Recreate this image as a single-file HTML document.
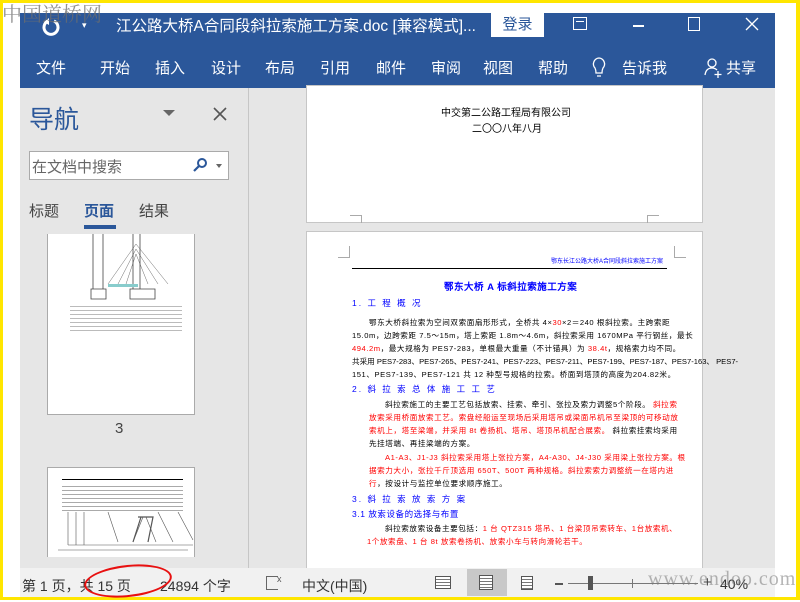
<!DOCTYPE html>
<html><head><meta charset="utf-8"><style>
*{margin:0;padding:0;box-sizing:border-box}
body{width:800px;height:600px;position:relative;background:#fff;overflow:hidden;font-family:"Liberation Sans","Noto Sans CJK SC",sans-serif}
.a{position:absolute}
.ui{font-family:"Liberation Sans","Noto Sans CJK SC",sans-serif}
.doc{font-family:"Liberation Sans","WenQuanYi Zen Hei",sans-serif;font-size:7.6px;line-height:10px;white-space:nowrap;letter-spacing:0.55px}
.l{position:absolute;white-space:nowrap}
.r{color:#f00}.b{color:#00f}
</style></head><body>
<div class="a" style="left:0;top:0;width:800px;height:3px;background:#ffe600"></div>
<div class="a" style="left:0;top:0;width:3px;height:600px;background:#ffe600"></div>
<div class="a" style="right:0;top:0;width:4px;height:600px;background:#ffe600"></div>
<div class="a" style="left:0;bottom:0;width:800px;height:3px;background:#ffe600"></div>

<div class="a" style="left:20px;top:13px;width:755px;height:75px;background:#2b579a"></div>
<svg class="a" style="left:40px;top:16px" width="22" height="22" viewBox="0 0 22 22"><path d="M8 5 A7 7 0 1 0 14 5" fill="none" stroke="#fff" stroke-width="3"/><path d="M9 2 L9 9 L4 6 Z" fill="#fff"/></svg>
<div class="a" style="left:82px;top:20px;color:#fff;font-size:9px">▾</div>
<div class="a ui" style="left:116px;top:14px;color:#fff;font-size:15.5px">江公路大桥A合同段斜拉索施工方案.doc [兼容模式]...</div>
<div class="a ui" style="left:491px;top:13px;width:53px;height:24px;background:#fff;color:#2b579a;font-size:15px;text-align:center;line-height:24px">登录</div>
<div class="a" style="left:573px;top:17px;width:14px;height:13px;border:1.5px solid #fff"></div>
<div class="a" style="left:576px;top:21px;width:8px;height:1px;background:#fff"></div>
<div class="a" style="left:633px;top:25px;width:11px;height:1.5px;background:#fff"></div>
<div class="a" style="left:688px;top:17px;width:12px;height:14px;border:1.3px solid #fff"></div>
<svg class="a" style="left:745px;top:17px" width="14" height="14"><path d="M1 1 L13 13 M13 1 L1 13" stroke="#fff" stroke-width="1.3"/></svg>
<div class="a ui" style="left:36px;top:57px;color:#fff;font-size:15px;white-space:nowrap">
<span style="position:absolute;left:0">文件</span><span style="position:absolute;left:64px">开始</span><span style="position:absolute;left:119px">插入</span><span style="position:absolute;left:175px">设计</span><span style="position:absolute;left:229px">布局</span><span style="position:absolute;left:284px">引用</span><span style="position:absolute;left:340px">邮件</span><span style="position:absolute;left:395px">审阅</span><span style="position:absolute;left:447px">视图</span><span style="position:absolute;left:502px">帮助</span><span style="position:absolute;left:586px">告诉我</span><span style="position:absolute;left:690px">共享</span></div>
<svg class="a" style="left:591px;top:56px" width="16" height="24"><path d="M8 2 A6 6 0 0 0 4 12 Q5 14 5 17 L11 17 Q11 14 12 12 A6 6 0 0 0 8 2 Z M6 20 L10 20" fill="none" stroke="#fff" stroke-width="1.3"/></svg>
<svg class="a" style="left:704px;top:57px" width="20" height="22"><circle cx="8" cy="6" r="4" fill="none" stroke="#fff" stroke-width="1.3"/><path d="M1 18 Q2 11 8 11 Q11 11 13 13 M14 14 L14 21 M10.5 17.5 L17.5 17.5" fill="none" stroke="#fff" stroke-width="1.3"/></svg>

<div class="a" style="left:20px;top:88px;width:228px;height:480px;background:#e6e6e6"></div>
<div class="a" style="left:248px;top:88px;width:1px;height:480px;background:#c6c6c6"></div>
<div class="a ui" style="left:29px;top:100px;font-size:25px;color:#2b579a">导航</div>
<div class="a" style="left:163px;top:110px;width:0;height:0;border-left:6px solid transparent;border-right:6px solid transparent;border-top:6px solid #666"></div>
<svg class="a" style="left:213px;top:107px" width="14" height="14"><path d="M1 1 L13 13 M13 1 L1 13" stroke="#555" stroke-width="1.6"/></svg>
<div class="a" style="left:29px;top:151px;width:200px;height:29px;background:#fff;border:1px solid #aaa"></div>
<div class="a ui" style="left:32px;top:156px;font-size:15px;color:#666">在文档中搜索</div>
<svg class="a" style="left:192px;top:157px" width="16" height="16"><circle cx="10" cy="6" r="4" fill="none" stroke="#2b579a" stroke-width="2"/><path d="M7 9 L2 14" stroke="#2b579a" stroke-width="2.2"/></svg>
<div class="a" style="left:216px;top:164px;width:0;height:0;border-left:3.5px solid transparent;border-right:3.5px solid transparent;border-top:4px solid #666"></div>
<div class="a ui" style="left:29px;top:200px;font-size:15px;color:#444">标题</div>
<div class="a ui" style="left:84px;top:200px;font-size:15px;color:#2b579a;font-weight:bold">页面</div>
<div class="a ui" style="left:139px;top:200px;font-size:15px;color:#444">结果</div>
<div class="a" style="left:84px;top:225px;width:32px;height:4px;background:#2b579a"></div>
<div class="a" style="left:47px;top:234px;width:148px;height:181px;background:#fff;border:1px solid #aaa;border-top:none"></div>
<svg class="a" style="left:48px;top:234px" width="146" height="70">
<g stroke="#444" stroke-width="0.8" fill="none"><path d="M45 0 V55 M55 0 V55 M43 55 H58 V65 H43Z M85 0 V55 M92 0 V55 M82 55 H107 V65 H82Z"/>
<path d="M88 10 L60 50 M88 15 L70 50 M88 20 L78 50 M88 10 L120 50 M88 15 L110 50 M88 20 L100 50" stroke-width="0.4"/></g>
<rect x="60" y="50" width="30" height="3" fill="#8cc"/></svg>
<div class="a" style="left:70px;top:304px;width:112px;height:30px;background:repeating-linear-gradient(#fff 0,#fff 2px,#bbb 2px,#bbb 3px,#fff 3px,#fff 4px)"></div>
<div class="a ui" style="left:115px;top:420px;font-size:15px;color:#444">3</div>
<div class="a" style="left:47px;top:467px;width:148px;height:90px;background:#fff;border:1px solid #aaa;border-bottom:none"></div>
<div class="a" style="left:62px;top:479px;width:121px;height:1px;background:#000"></div>
<div class="a" style="left:62px;top:483px;width:121px;height:30px;background:repeating-linear-gradient(#fff 0,#fff 3px,#aaa 3px,#aaa 4px)"></div>
<svg class="a" style="left:48px;top:512px" width="146" height="45"><g stroke="#555" stroke-width="0.6" fill="none"><path d="M20 0 V33 M28 0 V33 M36 0 V33 M60 0 L70 30 M95 5 L85 30 M98 5 L108 30 M110 0 L125 30 M130 0 L145 28 M20 33 H145 M10 38 H140"/><path d="M90 5 H105 L100 30 M93 5 L85 30" stroke-width="1.2"/></g></svg>

<div class="a" style="left:249px;top:88px;width:526px;height:480px;background:#e6e6e6"></div>
<div class="a" style="left:306px;top:85px;width:397px;height:138px;background:#fff;border:1px solid #c6c6c6"></div>
<div class="a doc" style="left:441px;top:108px;font-size:10px;line-height:12px;letter-spacing:0;color:#000">中交第二公路工程局有限公司</div>
<div class="a doc" style="left:472px;top:124px;font-size:10px;line-height:12px;letter-spacing:0;color:#000">二〇〇八年八月</div>
<div class="a" style="left:350px;top:215px;width:12px;height:8px;border-top:1px solid #aaa;border-right:1px solid #aaa"></div>
<div class="a" style="left:647px;top:215px;width:12px;height:8px;border-top:1px solid #aaa;border-left:1px solid #aaa"></div>

<div class="a" style="left:306px;top:231px;width:397px;height:337px;background:#fff;border:1px solid #c6c6c6;border-bottom:none;overflow:hidden">
<div class="a" style="left:31px;top:14px;width:12px;height:12px;border-bottom:1px solid #aaa;border-right:1px solid #aaa"></div>
<div class="a" style="left:367px;top:14px;width:12px;height:12px;border-bottom:1px solid #aaa;border-left:1px solid #aaa"></div>
</div>
<div class="a doc b" style="left:551px;top:258px;font-size:6px;line-height:8px;letter-spacing:0">鄂东长江公路大桥A合同段斜拉索施工方案</div>
<div class="a" style="left:352px;top:268px;width:315px;height:1px;background:#000"></div>
<div class="a doc b" style="left:444px;top:282px;font-size:9.5px;line-height:12px;font-weight:bold;letter-spacing:0.5px">鄂东大桥 A 标斜拉索施工方案</div>
<div class="a doc" style="left:0;top:0;width:800px;height:600px">
<div class="l b" style="left:352px;top:298px;font-size:8.5px;letter-spacing:2px">1. 工 程 概 况</div>
<div class="l" style="left:369px;top:318px">鄂东大桥斜拉索为空间双索面扇形形式，全桥共 4×<span class="r">30</span>×2＝240 根斜拉索。主跨索距</div>
<div class="l" style="left:352px;top:331px">15.0m，边跨索距 7.5～15m，塔上索距 1.8m～4.6m，斜拉索采用 1670MPa 平行钢丝，最长</div>
<div class="l" style="left:352px;top:344px"><span class="r">494.2m</span>，最大规格为 PES7-283，单根最大重量（不计锚具）为 <span class="r">38.4t</span>，规格索力均不同。</div>
<div class="l" style="left:352px;top:357px;letter-spacing:0">共采用 PES7-283、PES7-265、PES7-241、PES7-223、PES7-211、PES7-199、PES7-187、PES7-163、 PES7-</div>
<div class="l" style="left:352px;top:370px">151、PES7-139、PES7-121 共 12 种型号规格的拉索。桥面到塔顶的高度为204.82米。</div>
<div class="l b" style="left:352px;top:384px;font-size:8.5px;letter-spacing:2px">2. 斜 拉 索 总 体 施 工 工 艺</div>
<div class="l" style="left:385px;top:400px">斜拉索施工的主要工艺包括放索、挂索、牵引、张拉及索力调整5个阶段。 <span class="r">斜拉索</span></div>
<div class="l r" style="left:369px;top:413px">放索采用桥面放索工艺。索盘经船运至现场后采用塔吊或梁面吊机吊至梁顶的可移动放</div>
<div class="l r" style="left:369px;top:426px">索机上，塔至梁端，并采用 8t 卷扬机、塔吊、塔顶吊机配合展索。 <span style="color:#000">斜拉索挂索均采用</span></div>
<div class="l" style="left:369px;top:439px">先挂塔端、再挂梁端的方案。</div>
<div class="l r" style="left:385px;top:453px">A1-A3、J1-J3 斜拉索采用塔上张拉方案，A4-A30、J4-J30 采用梁上张拉方案。根</div>
<div class="l r" style="left:369px;top:466px">据索力大小，张拉千斤顶选用 650T、500T 两种规格。斜拉索索力调整统一在塔内进</div>
<div class="l" style="left:369px;top:479px"><span class="r">行</span>，按设计与监控单位要求顺序施工。</div>
<div class="l b" style="left:352px;top:494px;font-size:8.5px;letter-spacing:2px">3. 斜 拉 索 放 索 方 案</div>
<div class="l b" style="left:352px;top:509px;font-size:8.5px">3.1 放索设备的选择与布置</div>
<div class="l" style="left:385px;top:524px">斜拉索放索设备主要包括：<span class="r">1 台 QTZ315 塔吊、1 台梁顶吊索转车、1台放索机、</span></div>
<div class="l r" style="left:367px;top:537px">1个放索盘、1 台 8t 放索卷扬机、放索小车与转向滑轮若干。</div>
</div>

<div class="a" style="left:20px;top:568px;width:755px;height:29px;background:#f1f1f1"></div>
<div class="a ui" style="left:22px;top:576px;font-size:14px;color:#333;white-space:nowrap">第 1 页，共 15 页</div>
<div class="a ui" style="left:160px;top:576px;font-size:14px;color:#333">24894 个字</div>
<div class="a" style="left:266px;top:576px;width:12px;height:14px;border:1px solid #666;border-right:none"></div>
<div class="a ui" style="left:277px;top:574px;font-size:9px;color:#555">x</div>
<div class="a ui" style="left:302px;top:576px;font-size:14px;color:#333">中文(中国)</div>
<div class="a" style="left:435px;top:576px;width:16px;height:13px;border:1px solid #555;background:repeating-linear-gradient(#fff 0,#fff 2px,#777 2px,#777 3px)"></div>
<div class="a" style="left:467px;top:569px;width:40px;height:27px;background:#c8c8c8"></div>
<div class="a" style="left:479px;top:575px;width:14px;height:15px;border:1px solid #555;background:repeating-linear-gradient(#fff 0,#fff 2px,#777 2px,#777 3px)"></div>
<div class="a" style="left:521px;top:576px;width:12px;height:14px;border:1px solid #555;background:repeating-linear-gradient(#fff 0,#fff 2px,#777 2px,#777 3px)"></div>
<div class="a" style="left:555px;top:583px;width:8px;height:2px;background:#555"></div>
<div class="a" style="left:568px;top:583px;width:130px;height:1px;background:#777"></div>
<div class="a" style="left:588px;top:576px;width:5px;height:14px;background:#555"></div>
<div class="a" style="left:632px;top:579px;width:1px;height:9px;background:#777"></div>
<div class="a ui" style="left:703px;top:574px;font-size:15px;color:#444">+</div>
<div class="a ui" style="left:720px;top:576px;font-size:14px;color:#333">40%</div>
<div class="a" style="left:648px;top:568px;font-family:'Liberation Serif',serif;font-size:20px;color:rgba(120,120,120,0.55);letter-spacing:1px">www.endoo.com</div>
<div class="a" style="left:84px;top:565px;width:88px;height:32px;border:2.5px solid #e81010;border-radius:50%;transform:rotate(-6deg)"></div>

<div class="a" style="left:2px;top:-2px;font-family:'Noto Serif CJK SC',serif;font-size:20px;color:rgba(110,110,110,0.75)">中国道桥网</div>
</body></html>
